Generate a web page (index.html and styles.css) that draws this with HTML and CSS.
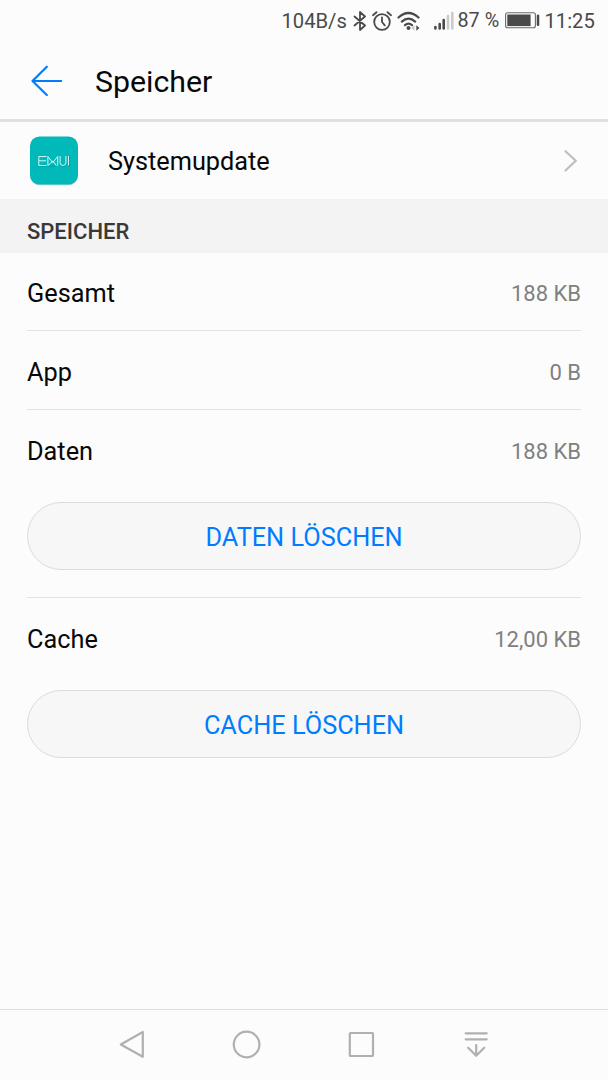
FILE: index.html
```html
<!DOCTYPE html>
<html lang="de">
<head>
<meta charset="utf-8">
<title>Speicher</title>
<link rel="stylesheet" href="styles.css">
</head>
<body>
<div class="screen">
  <header class="status">
    <span class="speed">104B/s</span>
    <svg class="bt" width="14" height="20" viewBox="0 0 14 20"><path d="M1.5 5.5 12 14.5 7 19V1l5 4.5L1.5 14.5"/></svg>
    <svg class="alarm" width="20" height="20" viewBox="0 0 20 20"><circle cx="10" cy="11" r="7.8"/><path d="M10 6.5V11l2.8 3.3M1 4.2 4.5 1.2M15.5 1.2 19 4.2"/></svg>
    <svg class="wifi" width="24" height="20" viewBox="0 0 24 20"><path d="M1.5 6.5Q11.5-2.5 21.5 6.5M4.8 10.6q6.7-6 13.4 0M8 14.2q3.5-3 7 0"/><circle class="solid" cx="11.5" cy="17" r="2"/><path class="solid" d="m19.3 14.2 3.2 2.8-3.2 2.8z"/><path class="pale" d="m17.5 14.2-3.2 2.8 3.2 2.8z"/></svg>
    <svg class="signal" width="20" height="20" viewBox="0 0 20 20"><path d="M1.4 16v1.5M5.7 13v4.5M9.7 9v8.5"/><path class="pale-bar" d="M14 5v12.5M18.3 2v15.5"/></svg>
    <span class="percent">87 %</span>
    <svg class="battery" width="36" height="17" viewBox="0 0 36 17"><rect class="case" x=".6" y=".8" width="29.8" height="15" rx="2"/><rect class="solid" x="2.3" y="2.5" width="23.3" height="11.6"/><path d="M33 3.8v9"/></svg>
    <span class="time">11:25</span>
  </header>

  <div class="titlebar">
    <svg class="back" width="32" height="32" viewBox="0 0 32 32"><path d="M30.2 16H1.5M15.8 1.7 1.5 16l14.3 14"/></svg>
    <h1 class="title">Speicher</h1>
  </div>

  <main class="content">
    <a class="app">
      <svg class="app-icon" width="50" height="50" viewBox="0 0 50 50"><rect class="tile-shadow" x="1" y="1.3" width="48" height="48" rx="9.5"/><rect class="tile" x="1" y=".5" width="48" height="48" rx="9.5"/><path class="mark-shadow" d="M17.5 30.3H9.8M19.5 30.3h6M31.3 28.5q.7 2 3 2t2.9-2M40.3 21v9.5"/><path class="mark" d="M17.5 20.5H9.8v9h7.7M9.8 24.8h7.2M18.9 29.5v-9l4.9 6 4.9-6v9M19 29.5l4.8-4.5 3.5 4.5M31.1 20v6.5q0 3 2.9 3t2.9-3V20M39.5 20v9.5"/></svg>
      <span class="app-name">Systemupdate</span>
      <svg class="chevron" width="14" height="22" viewBox="0 0 14 22"><path d="m1.5 1.2 10.3 9.6L1.5 20.5"/></svg>
    </a>
    <h2 class="section">SPEICHER</h2>
    <div class="list">
      <div class="row first"><span class="label">Gesamt</span><span class="value">188 KB</span></div>
      <div class="row"><span class="label">App</span><span class="value">0 B</span></div>
      <div class="group">
        <div class="row plain"><span class="label">Daten</span><span class="value">188 KB</span></div>
        <button class="button">DATEN LÖSCHEN</button>
      </div>
      <div class="group last">
        <div class="row plain"><span class="label">Cache</span><span class="value">12,00 KB</span></div>
        <button class="button">CACHE LÖSCHEN</button>
      </div>
    </div>
  </main>

  <nav class="nav">
    <svg width="30" height="30" viewBox="0 0 30 30"><path d="M25.8 2v24.8L3.8 14.5z"/></svg>
    <svg width="30" height="30" viewBox="0 0 30 30"><circle cx="14.6" cy="14.5" r="12.8"/></svg>
    <svg width="30" height="30" viewBox="0 0 30 30"><rect x="3.8" y="3" width="23.2" height="23" rx=".8"/></svg>
    <svg width="30" height="30" viewBox="0 0 30 30"><path d="M4.7 3.3h21M4.7 9.3h21M15.2 15V25.8M7.2 17.7l8 8 8-8"/></svg>
  </nav>
</div>
</body>
</html>
```
FILE: styles.css
```css
* { box-sizing: border-box; }
body {
  margin: 0;
  background: #fcfcfc;
  color: #080808;
  font-family: Roboto, "Liberation Sans", sans-serif;
}
svg { display: block; flex: none; fill: none; stroke-linecap: round; stroke-linejoin: round; }
.screen { width: 608px; height: 1080px; display: flex; flex-direction: column; }

.status {
  height: 42px;
  padding-left: 281.5px;
  display: flex;
  align-items: center;
  color: #4a4a4a;
  font-size: 20.2px;
  line-height: 42px;
  white-space: nowrap;
}
.status svg { stroke: #4a4a4a; stroke-width: 1.8; }
.status .solid { fill: #4a4a4a; stroke: none; }
.status .pale { fill: #cacaca; stroke: none; }
.speed { width: 71px; }
.bt { margin: -1px 0 0 0; }
.alarm { margin: -1px 0 0 5px; }
.wifi { margin: -1px 0 0 5px; }
.wifi path { stroke-width: 2.2; }
.signal { margin: 0 0 0 13px; }
.signal path { stroke-width: 2.6; }
.signal .pale-bar { stroke: #cbcbcb; }
.percent { width: 44px; margin: -1px 0 0 4px; font-size: 19.8px; }
.battery { margin: -2px 0 0 3px; }
.battery .case { stroke-width: 1.1; stroke: #6a6a6a; }
.battery path { stroke-width: 2.5; }
.time { margin-left: 4px; }

.titlebar {
  height: 80px;
  padding: 1px 31px 0;
  border-bottom: 3px solid #e0e0e0;
  display: flex;
  align-items: center;
}
.back { stroke: #007dff; stroke-width: 2.2; }
.title { margin: 2px 0 0 32px; font-size: 30.3px; line-height: 36px; font-weight: 400; }

.app { height: 77px; padding: 0 30px 0 29px; display: flex; align-items: center; }
.tile { fill: #02b9ba; }
.tile-shadow { fill: #b9cccc; }
.mark { stroke: #e6fbfb; stroke-width: .9; stroke-linecap: butt; stroke-linejoin: miter; }
.mark-shadow { stroke: #078e90; stroke-width: .7; }
.app-name { flex: 1; margin: 2px 0 0 29px; font-size: 25.3px; }
.chevron { stroke: #bebebe; stroke-width: 2.2; }

.section {
  margin: 0;
  height: 54px;
  padding: 12px 27px 0;
  background: #f3f3f3;
  color: #383838;
  font-size: 22px;
  line-height: 42px;
  font-weight: 500;
}
.list { padding: 0 27px; }
.row {
  height: 79px;
  padding-top: 4px;
  border-bottom: 1px solid #e2e2e2;
  display: flex;
  align-items: center;
  justify-content: space-between;
}
.row.first { height: 78px; }
.row.plain { border: 0; padding-top: 1px; }
.label { font-size: 25.3px; }
.value { color: #808080; font-size: 22px; }
.group { height: 188px; padding-top: 1px; border-bottom: 1px solid #e2e2e2; }
.group.last { border: 0; }
.button {
  display: block;
  width: 100%;
  height: 68px;
  margin: 12px 0 0;
  padding: 3px 0 0;
  border: 1px solid #dcdcdc;
  border-radius: 34px;
  background: #f7f7f7;
  color: #007dff;
  font: 400 25.3px Roboto, "Liberation Sans", sans-serif;
}

.nav {
  height: 71px;
  margin-top: auto;
  padding: 0 117px;
  border-top: 1px solid #dfdfdf;
  display: flex;
  align-items: center;
  justify-content: space-between;
}
.nav svg { stroke: #b0b0b0; stroke-width: 2.2; }
```
